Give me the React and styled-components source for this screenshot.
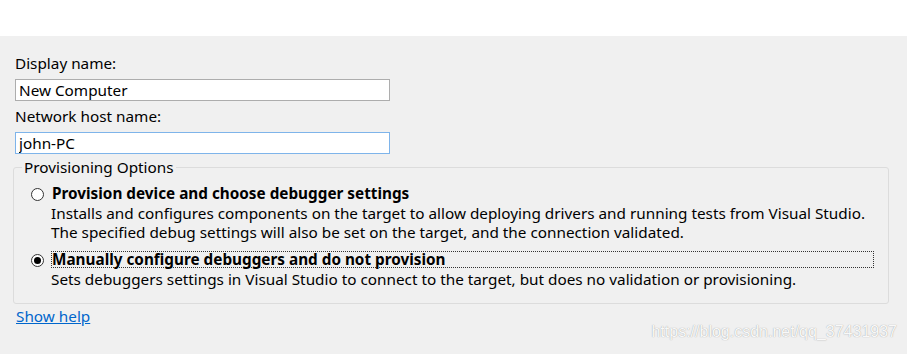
import React from "react";
import styled, { createGlobalStyle } from "styled-components";

const GlobalStyle = createGlobalStyle`
  html, body {
    margin: 0;
    padding: 0;
    background: #f0f0f0;
  }
  body {
    font-family: "Noto Sans", "Open Sans", sans-serif;
    font-size: 15.3px;
    color: #000;
  }
`;

const Page = styled.div`
  position: relative;
  width: 907px;
  height: 354px;
  overflow: hidden;
  background: #f0f0f0;
`;

const TopBand = styled.div`
  height: 36px;
  background: #ffffff;
`;

const Panel = styled.div`
  display: flex;
  flex-direction: column;
  padding: 18px 18px 0 15px;
`;

const Label = styled.div`
  line-height: 19px;
  margin-bottom: 6px;
`;

const TextBox = styled.input`
  box-sizing: border-box;
  width: 375px;
  height: 22px;
  margin: 0 0 6px 0;
  padding: 0 3px;
  border: 1px solid ${(p) => (p.$focused ? "#7eb4ea" : "#adadad")};
  background: #fff;
  font-family: inherit;
  font-size: 15.3px;
  color: #000;
  outline: none;
`;

const GroupBox = styled.fieldset`
  margin: -2px 0 0 -2px;
  width: 876px;
  box-sizing: border-box;
  padding: 8px 14px 14px 8px;
  border: 1px solid #dcdcdc;
  border-radius: 3px;
  display: flex;
  flex-direction: column;
  gap: 9px;
`;

const Legend = styled.legend`
  padding: 0 2px;
  line-height: 19px;
`;

const Option = styled.div`
  display: flex;
  flex-direction: column;
  gap: 2px;
`;

const OptionHead = styled.div`
  display: flex;
  align-items: center;
  gap: 7px;
  padding-left: 9px;
`;

const Radio = styled.span`
  box-sizing: border-box;
  width: 13px;
  height: 13px;
  flex: none;
  border-radius: 50%;
  border: 1px solid #333;
  background: #fff;
  display: flex;
  align-items: center;
  justify-content: center;
  margin-top: 2px;

  &::after {
    content: "";
    width: 7px;
    height: 7px;
    border-radius: 50%;
    background: ${(p) => (p.$checked ? "#000" : "transparent")};
  }
`;

const OptionTitle = styled.div`
  flex: 1;
  font-weight: bold;
  line-height: 15px;
  border: 1px dotted ${(p) => (p.$focused ? "#333" : "transparent")};
`;

const Description = styled.div`
  padding-left: 29px;
  line-height: 19px;
`;

const HelpLink = styled.a`
  align-self: flex-start;
  margin: 3px 0 0 1px;
  line-height: 19px;
  color: #0066cc;
  text-decoration: underline;
  cursor: pointer;
`;

const Watermark = styled.div`
  position: absolute;
  right: 10px;
  bottom: 13px;
  font-family: "Liberation Sans", Arial, sans-serif;
  font-size: 16px;
  color: rgba(255, 255, 255, 0.95);
  text-shadow: 0 0 1px rgba(120, 120, 120, 0.8);
`;

const options = [
  {
    title: "Provision device and choose debugger settings",
    lines: [
      "Installs and configures components on the target to allow deploying drivers and running tests from Visual Studio.",
      "The specified debug settings will also be set on the target, and the connection validated.",
    ],
    checked: false,
  },
  {
    title: "Manually configure debuggers and do not provision",
    lines: [
      "Sets debuggers settings in Visual Studio to connect to the target, but does no validation or provisioning.",
    ],
    checked: true,
  },
];

export default function App() {
  return (
    <Page>
      <GlobalStyle />
      <TopBand />
      <Panel>
        <Label>Display name:</Label>
        <TextBox defaultValue="New Computer" />
        <Label>Network host name:</Label>
        <TextBox $focused defaultValue="john-PC" />
        <GroupBox>
          <Legend>Provisioning Options</Legend>
          {options.map((o) => (
            <Option key={o.title}>
              <OptionHead>
                <Radio $checked={o.checked} />
                <OptionTitle $focused={o.checked}>{o.title}</OptionTitle>
              </OptionHead>
              <Description>
                {o.lines.map((l) => (
                  <div key={l}>{l}</div>
                ))}
              </Description>
            </Option>
          ))}
        </GroupBox>
        <HelpLink>Show help</HelpLink>
      </Panel>
      <Watermark>https://blog.csdn.net/qq_37431937</Watermark>
    </Page>
  );
}
